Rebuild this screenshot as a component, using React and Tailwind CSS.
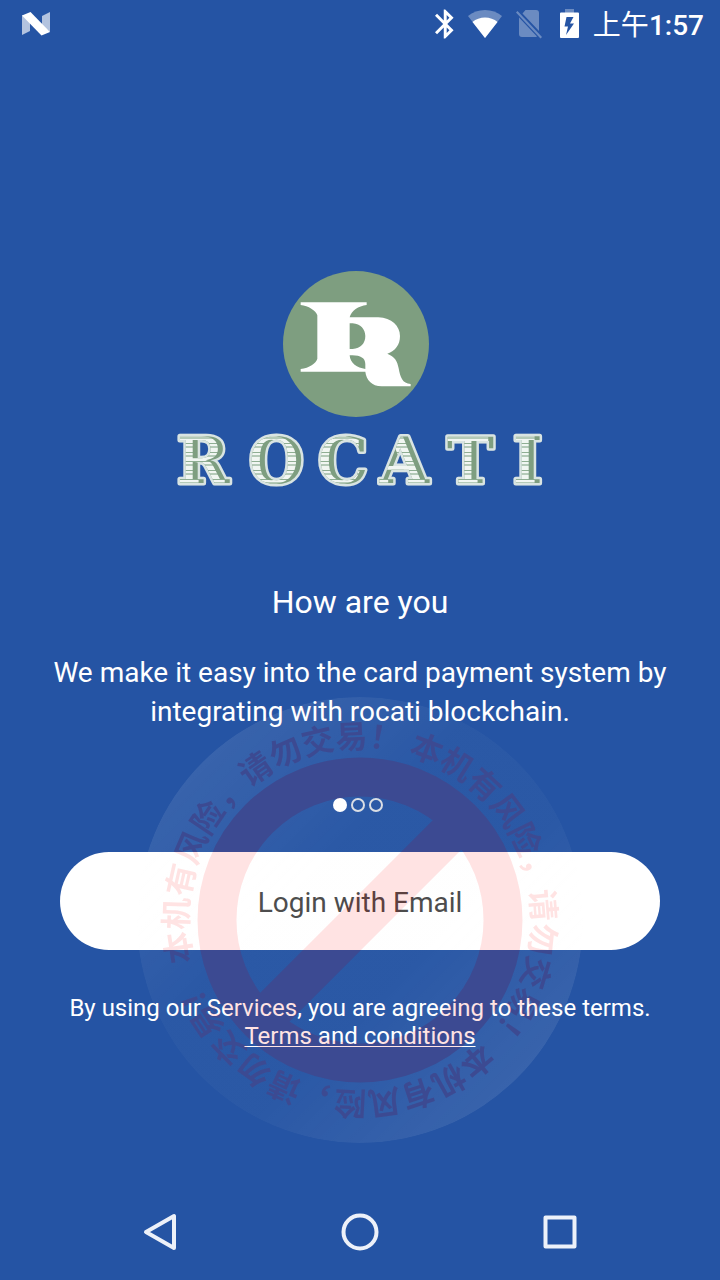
import React from "react";

const WARNING = "本机有风险，请勿交易！";

function StatusBar() {
  return (
    <header className="flex h-12 items-center justify-between pr-4 pl-[22px]">
      <svg className="h-6 w-7" viewBox="0 0 28 24" fill="#fff" aria-hidden="true">
        <path d="M0 3v20l8-4V9z" opacity=".65" />
        <path d="M28 0v20l-8-6V4z" opacity=".65" />
        <path d="M0 3.500L8.500 0 28 20l-8.500 3.500z" />
      </svg>
      <div className="flex items-center gap-3.5">
        <svg className="h-[30px] w-[19px]" viewBox="5 2 13 20" fill="#fff" aria-hidden="true">
          <path d="M17.710 7.710L12 2h-1v7.590L6.410 5 5 6.410 10.590 12 5 17.590 6.410 19 11 14.410V22h1l5.710-5.710-4.300-4.290 4.300-4.290zM13 5.830l1.880 1.880L13 9.590V5.830zm1.880 10.460L13 18.170v-3.760l1.880 1.880z" />
        </svg>
        <svg className="h-7 w-[34px]" viewBox="0 0 34 28" fill="#fff" aria-hidden="true">
          <path d="M17 28L0 6C9-2 25-2 34 6z" opacity=".32" />
          <path d="M17 28L4.500 12C11 6 23 6 29.500 12z" />
        </svg>
        <svg className="h-[30px] w-[26px]" viewBox="0 0 26 30" aria-hidden="true">
          <g opacity=".32" fill="#fff">
            <path d="M9.500 1H20q3 0 3 3v18L6.500 4.500zM3 8.500L21 27.500q-1 .5-2 .5H6q-3 0-3-3z" />
            <path d="M1.500 2L0 3.500 24.500 29.500 26 28z" />
          </g>
        </svg>
        <svg className="ml-1 h-[30px] w-[19px]" viewBox="0 0 19 30" aria-hidden="true">
          <path d="M5 0h9v4H5z" fill="#fff" opacity=".32" />
          <path fillRule="evenodd" fill="#fff" d="M1 3.500h17q1 0 1 1V28q0 1-1 1H1q-1 0-1-1V4.500q0-1 1-1zM6.500 8L4.500 17.500h3.500L6 26 14 14.500h-4L13.500 8z" />
        </svg>
        <span
          lang="zh-CN"
          className="pt-1 font-[Roboto,'Noto_Sans_CJK_SC',sans-serif] text-[28px] leading-8 font-medium text-white"
        >
          <span className="font-normal">上午</span>1:57
        </span>
      </div>
    </header>
  );
}

function Logo() {
  return (
    <svg
      className="h-[218px] w-[376px]"
      viewBox="172 270 376 218"
      role="img"
      aria-label="Rocati"
    >
      <defs>
        <pattern id="engraving" width="40" height="9" patternUnits="userSpaceOnUse">
          <rect width="40" height="9" fill="#f1f6f2" />
          <rect y="2" width="40" height="1" fill="#8fae93" />
          <rect y="5" width="40" height="2" fill="#b4cab8" />
        </pattern>
        <text
          id="wordmark"
          x="177 249 318 380 447 513"
          y="483"
          fontFamily="DejaVu Serif, serif"
          fontWeight="700"
          fontSize="63"
        >
          ROCATI
        </text>
        <clipPath id="wordmark-clip">
          <use href="#wordmark" />
        </clipPath>
      </defs>
      <circle cx="356" cy="344" r="73" fill="#7e9e80" />
      <g transform="translate(270 260) scale(.3333)">
        <path
          fill="#fff"
          fillRule="evenodd"
          d="M92 127H290V135C265 138 244 152 239 172H325C365 174 390 198 390 228C390 255 376 272 352 281C374 290 382 302 386 325C391 352 397 371 422 372V379H335C305 378 289 360 286 335H92V327C118 324 138 310 142 296V166C138 152 115 137 92 135ZM239 190V267H248C272 265 286 250 286 228C286 208 272 192 248 190ZM239 286C240 310 262 324 286 327V312C286 292 268 284 239 286Z"
        />
      </g>
      <use href="#wordmark" fill="none" stroke="#d9e4e2" strokeWidth="5" strokeLinejoin="round" />
      <use href="#wordmark" fill="#7e9e80" />
      <g clipPath="url(#wordmark-clip)">
        <use href="#wordmark" x="-5" fill="url(#engraving)" />
      </g>
    </svg>
  );
}

function Watermark() {
  return (
    <svg
      className="pointer-events-none absolute top-[697px] left-1/2 h-[446px] w-[446px] -translate-x-1/2"
      viewBox="-223 -223 446 446"
    >
      <defs>
        <linearGradient id="sheen" x1="0.15" y1="0.15" x2="0.85" y2="0.85">
          <stop offset="0" stopColor="#fff" stopOpacity=".09" />
          <stop offset=".35" stopColor="#fff" stopOpacity=".03" />
          <stop offset=".65" stopColor="#fff" stopOpacity=".03" />
          <stop offset="1" stopColor="#fff" stopOpacity=".09" />
        </linearGradient>
        <path id="orbit" d="M0-172A172 172 0 0 1 0 172A172 172 0 0 1 0-172" />
        <g id="sign">
          <circle r="143" fill="none" strokeWidth="39" />
          <path d="M-93 95L95-93" strokeWidth="41" />
          <g
            lang="zh-CN"
            stroke="none"
            fontFamily="Noto Sans CJK SC, sans-serif"
            fontSize="32"
            fontWeight="700"
          >
            {[-104, 16, 135].map((angle) => (
              <text key={angle} transform={`rotate(${angle})`}>
                <textPath href="#orbit">{WARNING}</textPath>
              </text>
            ))}
          </g>
        </g>
        <mask id="clear-of-sign" maskUnits="userSpaceOnUse" x="-223" y="-223" width="446" height="446">
          <circle r="223" fill="#fff" />
          <use href="#sign" fill="#000" stroke="#000" />
        </mask>
      </defs>
      <circle r="223" fill="url(#sheen)" mask="url(#clear-of-sign)" />
      <g opacity=".105">
        <use href="#sign" fill="#f00" stroke="#f00" />
      </g>
    </svg>
  );
}

function NavigationBar() {
  return (
    <nav className="grid h-24 grid-cols-3 px-[60px]">
      <button type="button" aria-label="Back" className="flex items-center justify-center">
        <svg className="size-10" viewBox="0 0 40 40" fill="none" stroke="#edf1f9" strokeWidth="4" strokeLinejoin="round">
          <path d="M34 4v32L6 20z" />
        </svg>
      </button>
      <button type="button" aria-label="Home" className="flex items-center justify-center">
        <svg className="size-10" viewBox="0 0 40 40" fill="none" stroke="#edf1f9" strokeWidth="4">
          <circle cx="20" cy="20" r="16.500" />
        </svg>
      </button>
      <button type="button" aria-label="Recent apps" className="flex items-center justify-center">
        <svg className="size-10" viewBox="0 0 40 40" fill="none" stroke="#edf1f9" strokeWidth="4" strokeLinejoin="round">
          <path d="M5.500 5.500h29v29h-29z" />
        </svg>
      </button>
    </nav>
  );
}

export default function App() {
  return (
    <div className="relative flex min-h-screen flex-col bg-[#2554a4] font-[Roboto,sans-serif] text-white">
      <StatusBar />
      <main className="flex flex-1 flex-col items-center px-[50px] pt-[222px] text-center">
        <Logo />
        <h1 className="mt-[94px] text-[32px] leading-10">How are you</h1>
        <p className="mt-[31px] text-[28px] leading-[39px]">
          We make it easy into the card payment system by integrating with rocati blockchain.
        </p>
        <div className="mt-[67px] flex">
          <button type="button" aria-label="Slide 1" aria-current="true" className="mr-1 size-[14px] rounded-full bg-white" />
          <button type="button" aria-label="Slide 2" className="mr-1 size-[14px] rounded-full border-2 border-[#d9dde4]" />
          <button type="button" aria-label="Slide 3" className="mr-1 size-[14px] rounded-full border-2 border-[#d9dde4]" />
        </div>
        <div className="mt-10 w-full px-[10px]">
          <button type="button" className="h-[98px] w-full rounded-full bg-white pt-1 text-[28px] text-[#484848]">
            Login with Email
          </button>
        </div>
        <p className="mt-11 text-[24px] leading-7">
          By using our Services, you are agreeing to these terms.
          <br />
          <a href="#terms" className="underline decoration-1 underline-offset-2">
            Terms and conditions
          </a>
        </p>
      </main>
      <NavigationBar />
      <Watermark />
    </div>
  );
}
